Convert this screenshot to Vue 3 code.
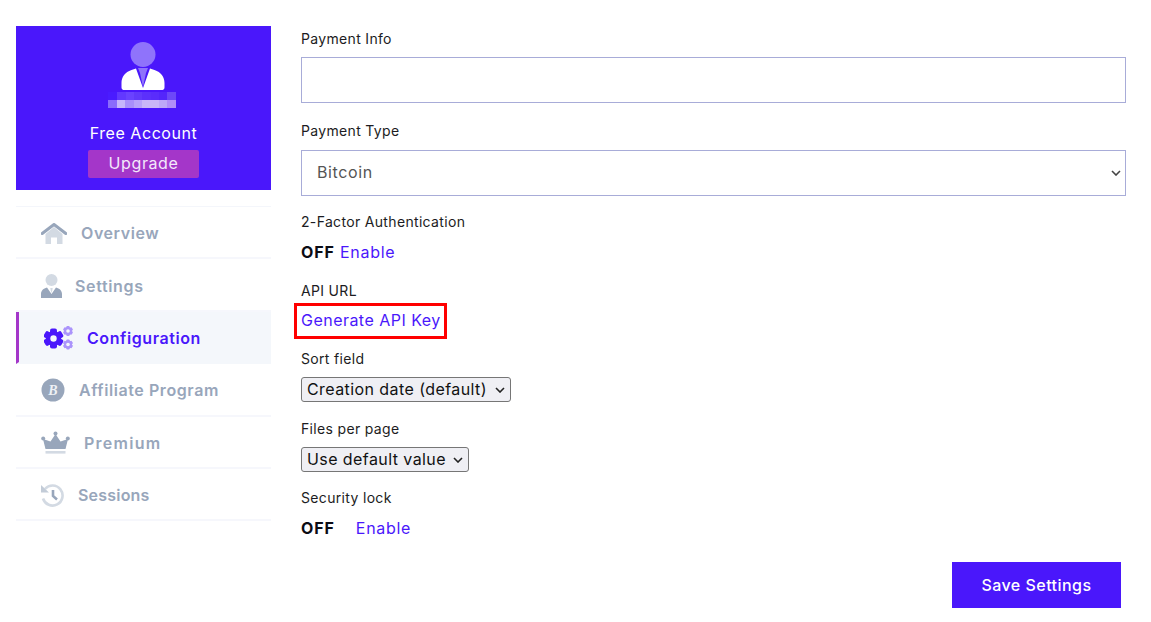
<script setup>
const nav = [
  { label: 'Overview', icon: 'home', gap: 14, ls: 0.58 },
  { label: 'Settings', icon: 'user', gap: 13, ls: 0.65 },
  { label: 'Configuration', icon: 'gears', gap: 13, ls: 0.58, active: true },
  { label: 'Affiliate Program', icon: 'coin', gap: 14, ls: 0.58 },
  { label: 'Premium', icon: 'crown', gap: 14, ls: 1.25 },
  { label: 'Sessions', icon: 'history', gap: 14, ls: 0.2 }
]
const pixels = [
  [0, 0, 9, '#4a1bff'], [9, 0, 9, '#6238ff'], [18, 0, 8, '#6a42ff'], [26, 0, 8, '#6239fb'], [34, 0, 9, '#5c30fb'], [43, 0, 8, '#5a2cfb'], [51, 0, 8, '#5426fb'], [59, 0, 9, '#6d48f8'],
  [0, 8, 9, '#8a6cfb'], [9, 8, 8, '#c7b6fb'], [17, 8, 9, '#a98ffa'], [26, 8, 8, '#b8a2fa'], [34, 8, 17, '#c9b6f8'], [51, 8, 8, '#bda8f8'], [59, 8, 9, '#b08ef8']
]
const teeth = [0, 60, 120]
</script>

<template>
  <div class="page">
    <aside class="side">
      <div class="profile">
        <svg class="avatar" width="44" height="49" viewBox="0 0 44 49">
          <circle cx="22" cy="12.5" r="12.5" fill="#8f73fb" />
          <path d="M10.5 28 L15 26.5 L22 46 L29 26.5 L33.5 28 C40 30 43.5 35 43.5 41 V45.5 C43.5 47.5 42 48 40.5 48 H3.5 C2 48 .5 47.5 .5 45.5 V41 C.5 35 4 30 10.5 28 Z" fill="#fff" />
          <path d="M17 26 H27 L25 31 L22 45 L19 31 Z" fill="#8f73fb" />
        </svg>
        <svg class="blur" width="68" height="16" viewBox="0 0 68 16" shape-rendering="crispEdges">
          <rect v-for="(p, i) in pixels" :key="i" :x="p[0]" :y="p[1]" :width="p[2]" height="8" :fill="p[3]" />
        </svg>
        <div class="plan">Free Account</div>
        <a class="upgrade">Upgrade</a>
      </div>
      <nav class="nav">
        <a v-for="item in nav" :key="item.label" class="nav-item" :class="{ active: item.active }" :style="{ gap: item.gap + 'px', letterSpacing: item.ls + 'px' }">
          <svg v-if="item.icon === 'home'" width="26" height="21" viewBox="0 0 26 21">
            <path d="M4.5 11 L13 4 L21.5 11 V21 H16 V14.5 H10 V21 H4.5 Z" fill="#d3dae3" />
            <path d="M1.2 10.5 L13 1.5 L24.8 10.5" fill="none" stroke="#98a6bb" stroke-width="3" stroke-linecap="round" stroke-linejoin="round" />
          </svg>
          <svg v-else-if="item.icon === 'user'" width="21" height="24" viewBox="0 0 21 24">
            <circle cx="10.5" cy="6" r="6" fill="#d3dae3" />
            <path d="M6 13.5 L10.5 20 L15 13.5 C18.5 14.5 21 16.5 21 20 V24 H0 V20 C0 16.5 2.5 14.5 6 13.5 Z" fill="#98a6bb" />
            <path d="M9.3 14 H11.7 L11.2 17 L10.5 19 L9.8 17 Z" fill="#d3dae3" />
          </svg>
          <svg v-else-if="item.icon === 'gears'" width="30" height="24" viewBox="0 0 30 24">
            <g fill="#4a17fb">
              <circle cx="9.5" cy="12.5" r="7.6" />
              <rect v-for="a in teeth" :key="a" x="6" y="2.4" width="7" height="20.2" rx="2" :transform="`rotate(${a} 9.5 12.5)`" />
            </g>
            <circle cx="9.5" cy="12.5" r="3.2" fill="#f4f7fb" />
            <g fill="#ab94fb">
              <circle cx="24" cy="5" r="4" />
              <rect v-for="a in teeth" :key="a" x="22.3" y="0" width="3.4" height="10" rx="1" :transform="`rotate(${a} 24 5)`" />
              <circle cx="24" cy="18.5" r="4" />
              <rect v-for="a in teeth" :key="a" x="22.3" y="13.5" width="3.4" height="10" rx="1" :transform="`rotate(${a} 24 18.5)`" />
            </g>
            <circle cx="24" cy="5" r="1.8" fill="#f4f7fb" />
            <circle cx="24" cy="18.5" r="1.8" fill="#f4f7fb" />
          </svg>
          <svg v-else-if="item.icon === 'coin'" width="24" height="24" viewBox="0 0 24 24">
            <circle cx="12" cy="12" r="11.5" fill="#98a6bb" />
            <text x="12" y="17" text-anchor="middle" class="coin-b">B</text>
          </svg>
          <svg v-else-if="item.icon === 'crown'" width="29" height="24" viewBox="0 0 29 24">
            <path d="M4.5 18 L2 8 L9.5 10.5 L14.5 3 L19.5 10.5 L27 8 L24.5 18 Z" fill="#98a6bb" />
            <circle cx="2.2" cy="7.5" r="2" fill="#98a6bb" />
            <circle cx="14.5" cy="2.5" r="2" fill="#98a6bb" />
            <circle cx="26.8" cy="7.5" r="2" fill="#98a6bb" />
            <rect x="4.5" y="20" width="20" height="2.6" fill="#d3dae3" />
          </svg>
          <svg v-else width="23" height="23" viewBox="0 0 23 23">
            <path d="M4 5 A10 10 0 1 1 2 14.5" fill="none" stroke="#d3dae3" stroke-width="2.6" />
            <path d="M0 1 L8 8.5 H0 Z" fill="#c3ccd8" />
            <path d="M12 6 V12 L16 15.5" fill="none" stroke="#98a6bb" stroke-width="2.6" />
          </svg>
          <span>{{ item.label }}</span>
        </a>
      </nav>
    </aside>

    <main class="form">
      <label class="label first">Payment Info</label>
      <input class="field" type="text" />

      <label class="label l-type">Payment Type</label>
      <select class="field picker">
        <option>Bitcoin</option>
      </select>

      <label class="label l-2fa">2-Factor Authentication</label>
      <div class="status"><b>OFF</b> <a>Enable</a></div>

      <label class="label l-api">API URL</label>
      <div class="api"><a class="api-link">Generate API Key</a></div>

      <label class="label l-sort">Sort field</label>
      <select class="native sort"><option>Creation date (default)</option></select>

      <label class="label l-files">Files per page</label>
      <select class="native files"><option>Use default value</option></select>

      <label class="label l-lock">Security lock</label>
      <div class="status lock"><b>OFF</b><a>Enable</a></div>

      <div class="actions"><button class="save">Save Settings</button></div>
    </main>
  </div>
</template>

<style>
html, body { margin: 0; background: #fff; }
</style>

<style scoped>
.page {
  display: flex;
  gap: 30px;
  width: 1151px;
  height: 622px;
  box-sizing: border-box;
  padding: 26px 25px 0 16px;
  overflow: hidden;
  font-family: Inter, "Noto Sans", sans-serif;
  color: #1c1c22;
}
.side { width: 255px; flex: none; }
.profile {
  height: 164px;
  background: #4a17fb;
  display: flex;
  flex-direction: column;
  align-items: center;
  box-sizing: border-box;
  padding-top: 16px;
}
.avatar { display: block; margin-left: -1px; }
.blur { display: block; margin: 1px 0 0 -4px; }
.plan { color: #fff; font-size: 16px; line-height: 20px; margin-top: 15px; letter-spacing: .55px; }
.upgrade {
  width: 111px;
  height: 28px;
  margin-top: 7px;
  border-radius: 2px;
  background: #a436c9;
  color: #f3e8fb;
  font-size: 16px;
  line-height: 26px;
  text-align: center;
  letter-spacing: .6px;
}
.nav { margin-top: 16px; border-top: 1px solid #f4f6fb; }
.nav-item {
  height: 52.4px;
  display: flex;
  align-items: center;
  padding: 2px 0 0 25px;
  border-bottom: 2px solid #f6f7fc;
  box-sizing: border-box;
  color: #98a6bb;
  font-size: 16px;
  font-weight: 600;
}
.nav-item svg { flex: none; }
.nav-item.active {
  background: #f4f7fb;
  color: #4a17fb;
  border-left: 3px solid #a436c9;
  padding-left: 25px;
  border-bottom-color: #f4f7fb;
}
.coin-b { font: italic 700 14px "Liberation Serif", serif; fill: #eef1f5; letter-spacing: 0; }
.form { flex: 1; display: flex; flex-direction: column; align-items: flex-start; }
.label { font-size: 14px; line-height: 18px; color: #1c1c22; letter-spacing: .33px; }
.first { margin-top: 4px; }
.field {
  display: block;
  width: 825px;
  height: 46px;
  margin-top: 9px;
  box-sizing: border-box;
  border: 1px solid #a8acd8;
  background: #fff;
  border-radius: 0;
  outline: 0;
}
.picker {
  appearance: none;
  font-family: inherit;
  font-size: 16px;
  letter-spacing: .6px;
  color: #555;
  padding: 0 0 2px 15px;
  margin-top: 10px;
  background: #fff url("data:image/svg+xml,%3Csvg xmlns='http://www.w3.org/2000/svg' width='10' height='6'%3E%3Cpath d='M1 1l4 4 4-4' fill='none' stroke='%23444' stroke-width='1.6'/%3E%3C/svg%3E") no-repeat right 4px center;
}
.l-type { margin-top: 19px; }
.l-2fa { margin-top: 17px; }
.status { font-size: 16px; line-height: 22px; margin-top: 10px; color: #111; letter-spacing: .7px; }
.status b { font-weight: 700; color: #0c0c14; letter-spacing: .9px; }
.status a, .api-link { color: #4a17fb; }
.l-api { margin-top: 19px; }
.api { margin: 3px 0 0 -7px; }
.api-link {
  display: block;
  border: 3px solid #f00;
  padding: 2px 4px;
  font-size: 16px;
  line-height: 24px;
  letter-spacing: .47px;
  box-sizing: border-box;
  height: 36px;
  width: 153px;
  white-space: nowrap;
}
.l-sort { margin-top: 11px; }
.native {
  appearance: none;
  margin-top: 9px;
  height: 25px;
  font-family: inherit;
  font-size: 16px;
  letter-spacing: .42px;
  border: 1px solid #767676;
  border-radius: 3px;
  color: #111;
  padding: 0 0 1px 5px;
  background: #efeff4 url("data:image/svg+xml,%3Csvg xmlns='http://www.w3.org/2000/svg' width='10' height='6'%3E%3Cpath d='M1 1l4 4 4-4' fill='none' stroke='%23222' stroke-width='1.6'/%3E%3C/svg%3E") no-repeat right 5px center;
}
.sort { width: 210px; }
.l-files { margin-top: 18px; }
.files { width: 168px; }
.l-lock { margin-top: 17px; }
.lock { margin-top: 10px; display: flex; gap: 21px; }
.actions { width: 100%; display: flex; justify-content: flex-end; margin-top: 23px; padding-right: 5px; box-sizing: border-box; }
.save {
  width: 169px;
  height: 46px;
  background: #4a17fb;
  color: #fff;
  border: 0;
  font-family: inherit;
  font-size: 16px;
  font-weight: 500;
  letter-spacing: .47px;
}
</style>
